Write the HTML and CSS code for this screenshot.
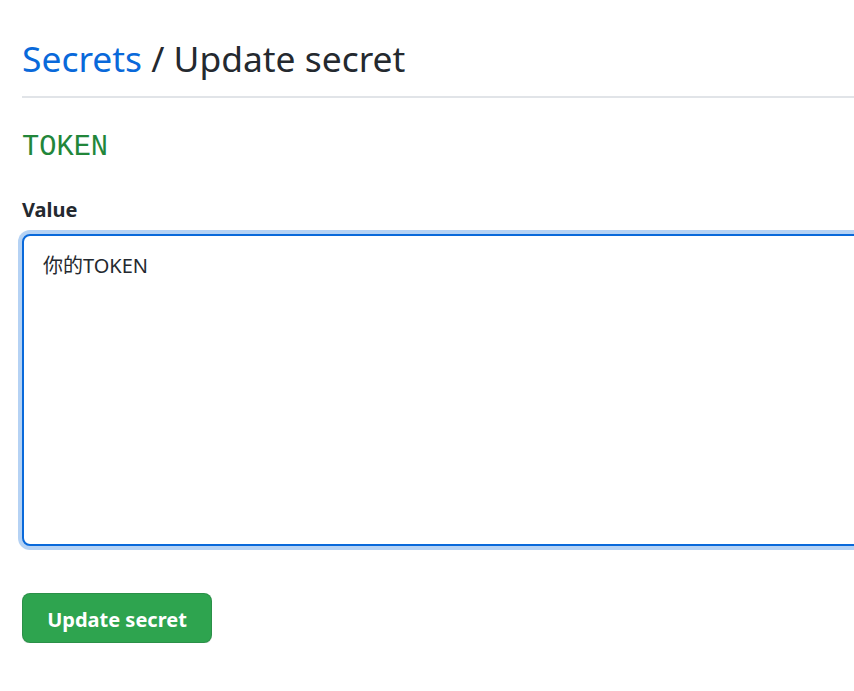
FILE: index.html
```html
<!DOCTYPE html>
<html lang="zh">
<head>
<meta charset="utf-8">
<title>Update secret</title>
<link rel="stylesheet" href="styles.css">
</head>
<body>
<div class="page">
  <div class="subhead">
    <h2 class="subhead-heading"><a class="crumb" href="#">Secrets</a> / Update secret</h2>
  </div>
  <h3 class="secret-name">TOKEN</h3>
  <form class="form">
    <label class="label" for="v">Value</label>
    <textarea id="v" class="value-box">你的TOKEN</textarea>
    <div class="actions">
      <button type="button" class="btn-primary">Update secret</button>
    </div>
  </form>
</div>
</body>
</html>
```
FILE: styles.css
```css
html, body {
  margin: 0;
  overflow: hidden;
  background: #ffffff;
}
body {
  font-family: "Noto Sans", "Noto Sans CJK SC", sans-serif;
  color: #24292f;
}
.page {
  width: 960px;
  padding: 0 0 0 22px;
}
.subhead {
  padding-top: 36px;
  padding-bottom: 16px;
  border-bottom: 2px solid #e1e4e8;
}
.subhead-heading {
  margin: 0;
  font-size: 35.4px;
  font-weight: 400;
  line-height: 44px;
}
.crumb {
  color: #0969da;
  text-decoration: none;
}
.secret-name {
  margin: 32px 0 0;
  font-family: "Liberation Mono", monospace;
  font-weight: 400;
  font-size: 28.7px;
  line-height: 36px;
  color: #22863a;
}
.form {
  margin-top: 30px;
  display: flex;
  flex-direction: column;
  align-items: flex-start;
}
.label {
  font-weight: 700;
  font-size: 20px;
  line-height: 28px;
}
.value-box {
  box-sizing: border-box;
  margin-top: 10px;
  width: 900px;
  height: 312px;
  padding: 15px 19px;
  border: 2px solid #0969da;
  border-radius: 8px;
  box-shadow: 0 0 0 4px rgba(9, 105, 218, 0.3);
  outline: none;
  resize: none;
  font-family: "Noto Sans", "Noto Sans CJK SC", sans-serif;
  font-size: 20px;
  line-height: 30px;
  color: #24292f;
}
.actions {
  margin-top: 47px;
}
.btn-primary {
  box-sizing: border-box;
  width: 190px;
  height: 50px;
  padding: 3px 0 0;
  border: 1.5px solid rgba(27, 31, 35, 0.15);
  border-radius: 8px;
  background: #2ea44f;
  color: #ffffff;
  font-family: "Noto Sans", sans-serif;
  font-weight: 700;
  font-size: 20px;
  cursor: pointer;
  box-shadow: 0 1px 0 rgba(27, 31, 35, 0.1);
}
```
